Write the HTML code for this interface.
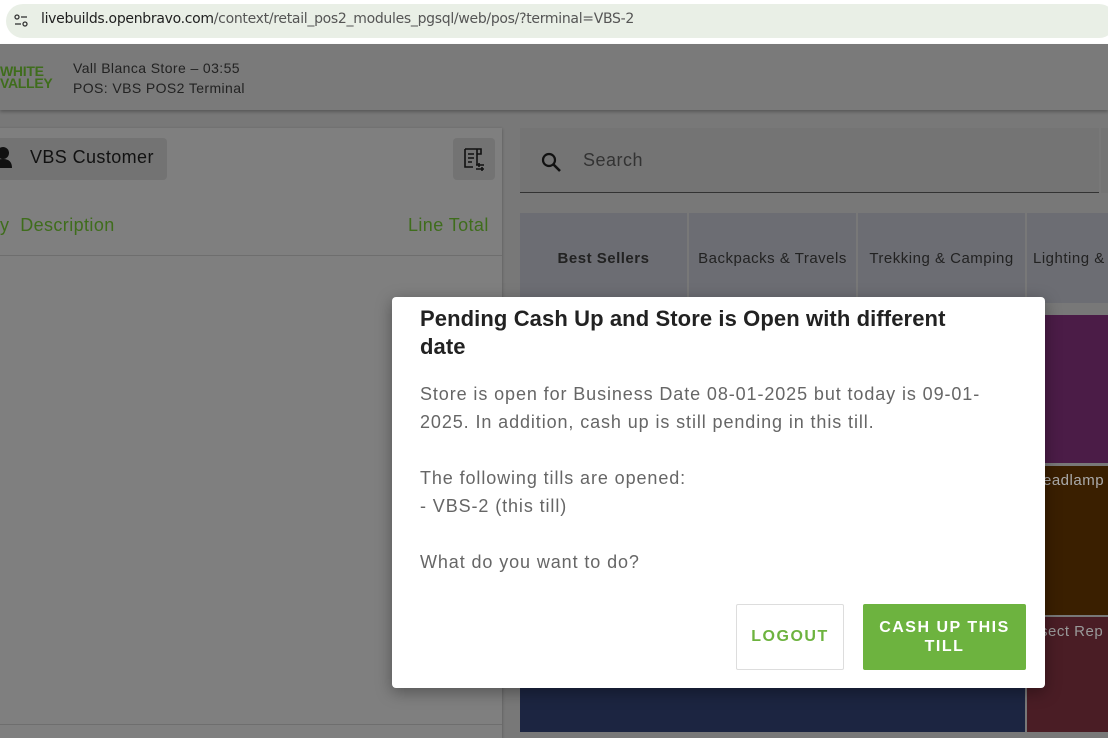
<!DOCTYPE html>
<html><head><style>
*{margin:0;padding:0;box-sizing:border-box}
body{width:1108px;height:732px;overflow:hidden;position:relative;background:#787878;font-family:"Liberation Sans",sans-serif}
.abs{position:absolute}
.url{left:0;top:0;width:1108px;height:44px;background:#fff}
.pill{left:6px;top:4px;width:1110px;height:34px;border-radius:17px;background:#e9efe6}
.urltext{left:41px;top:11px;font-size:14px;color:#1f1f1f;font-family:"DejaVu Sans","Liberation Sans",sans-serif;letter-spacing:-0.3px}
.hdr{left:0;top:44px;width:1108px;height:66px;background:#7a7a7a;box-shadow:0 2px 3px rgba(0,0,0,.25)}
.logo{left:0;top:65px;color:#3f6d1c;font-weight:bold;font-size:14px;line-height:12px;letter-spacing:-0.3px}
.store{left:73px;top:58px;font-size:14px;line-height:20px;color:#222;letter-spacing:0.4px}
.panel{left:-4px;top:128px;width:506px;height:610px;background:#7f7f7f;box-shadow:0 1px 3px rgba(0,0,0,.3)}
.cust{left:-4px;top:138px;width:171px;height:42px;background:#737373;border-radius:4px}
.tab{top:213px;height:90px;background:#6c6d73;font-size:15px;color:#222;display:flex;align-items:center;justify-content:center;letter-spacing:0.5px;white-space:nowrap}
.dlg{left:392px;top:297px;width:653px;height:391px;background:#fff;border-radius:4px;box-shadow:0 4px 16px rgba(0,0,0,.35)}
</style></head><body>
<div class="abs url"></div>
<div class="abs pill"></div>
<svg class="abs" style="left:13px;top:13px" width="16" height="16" viewBox="0 0 16 16"><circle cx="4" cy="4" r="2" fill="none" stroke="#333" stroke-width="1.3"/><line x1="8" y1="4" x2="14" y2="4" stroke="#333" stroke-width="1.3"/><line x1="2" y1="11" x2="8" y2="11" stroke="#333" stroke-width="1.3"/><circle cx="12" cy="11" r="2" fill="none" stroke="#333" stroke-width="1.3"/></svg>
<div class="abs urltext">livebuilds.openbravo.com<span style="color:#555">/context/retail_pos2_modules_pgsql/web/pos/?terminal=VBS-2</span></div>
<div class="abs hdr"></div>
<div class="abs logo">WHITE<br>VALLEY</div>
<div class="abs store">Vall Blanca Store – 03:55<br>POS: VBS POS2 Terminal</div>
<div class="abs panel"></div>
<div class="abs cust"></div>
<svg class="abs" style="left:0;top:146px" width="14" height="24" viewBox="0 0 14 24"><circle cx="3" cy="7" r="6" fill="#111"/><path d="M-6 22 Q-6 13 3 13 Q12 13 12 22Z" fill="#111"/></svg>
<div class="abs" style="left:30px;top:147px;font-size:18px;color:#111;letter-spacing:0.4px">VBS Customer</div>
<div class="abs" style="left:453px;top:138px;width:42px;height:42px;background:#737373;border-radius:4px"></div>
<svg class="abs" style="left:461px;top:145px" width="26" height="28" viewBox="0 0 26 28" fill="none" stroke="#111" stroke-width="1.6"><path d="M4 4h12v16M4 4v18h8M7 9h6M7 13h6M7 17h4M16 4h4v5h-4"/><path d="M15 20h8M15 24h8M18 18v4M21 22v4"/></svg>
<div class="abs" style="left:0;top:215px;font-size:18px;color:#3f6d1c;letter-spacing:0.4px">y&nbsp;&nbsp;Description</div>
<div class="abs" style="left:408px;top:215px;font-size:18px;color:#3f6d1c;letter-spacing:0.4px">Line Total</div>
<div class="abs" style="left:0;top:255px;width:502px;height:1px;background:#6e6e6e"></div>
<div class="abs" style="left:0;top:724px;width:502px;height:1px;background:#6e6e6e"></div>
<div class="abs" style="left:520px;top:128px;width:579px;height:65px;background:#747474;border-bottom:1px solid #333"></div>
<div class="abs" style="left:1101px;top:128px;width:7px;height:65px;background:#747474"></div>
<svg class="abs" style="left:539px;top:150px" width="24" height="24" viewBox="0 0 24 24"><circle cx="10" cy="10" r="6" fill="none" stroke="#111" stroke-width="2.2"/><line x1="14.5" y1="14.5" x2="21" y2="21" stroke="#111" stroke-width="2.6"/></svg>
<div class="abs" style="left:583px;top:150px;font-size:18px;color:#333;letter-spacing:0.5px">Search</div>
<div class="abs tab" style="left:520px;width:167px;font-weight:bold">Best Sellers</div>
<div class="abs tab" style="left:689px;width:167px">Backpacks &amp; Travels</div>
<div class="abs tab" style="left:858px;width:167px">Trekking &amp; Camping</div>
<div class="abs tab" style="left:1027px;width:90px;justify-content:flex-start;padding-left:6px">Lighting &amp;</div>
<div class="abs" style="left:520px;top:315px;width:505px;height:417px;background:#1c2541"></div>
<div class="abs" style="left:1027px;top:315px;width:81px;height:148px;background:#4b1c47"></div>
<div class="abs" style="left:1027px;top:466px;width:81px;height:149px;background:#3a1f00"></div>
<div class="abs" style="left:1043px;top:472px;font-size:15px;color:#aaa;letter-spacing:0.5px">eadlamp</div>
<div class="abs" style="left:1027px;top:617px;width:81px;height:115px;background:#4a1d25"></div>
<div class="abs" style="left:1040px;top:623px;font-size:15px;color:#999;letter-spacing:0.5px">sect Rep</div>
<div class="abs dlg"></div>
<div class="abs" style="left:420px;top:305px;width:540px;font-size:22px;line-height:28px;font-weight:bold;color:#222;letter-spacing:0.1px">Pending Cash Up and Store is Open with different date</div>
<div class="abs" style="left:420px;top:380px;width:565px;font-size:18px;line-height:28px;color:#666;letter-spacing:0.9px">Store is open for Business Date 08-01-2025 but today is 09-01-2025. In addition, cash up is still pending in this till.<br><br>The following tills are opened:<br>- VBS-2 (this till)<br><br>What do you want to do?</div>
<div class="abs" style="left:736px;top:604px;width:108px;height:66px;border:1px solid #ddd;border-radius:2px;display:flex;align-items:center;justify-content:center;color:#6db33f;font-weight:bold;font-size:16px;letter-spacing:1.5px">LOGOUT</div>
<div class="abs" style="left:863px;top:604px;width:163px;height:66px;background:#6db33f;border-radius:2px;display:flex;align-items:center;justify-content:center;text-align:center;color:#fff;font-weight:bold;font-size:16px;line-height:19px;letter-spacing:1.5px">CASH UP THIS<br>TILL</div>
</body></html>
